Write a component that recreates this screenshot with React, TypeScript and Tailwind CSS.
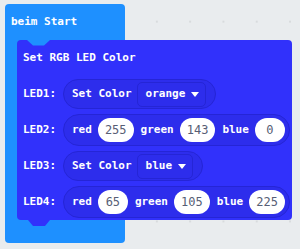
const mono = "font-['DejaVu_Sans_Mono','Liberation_Mono',monospace]";

type Part = { label: string; value: string };

function Oval({ value }: { value: string }) {
  return (
    <span className="flex h-[24px] min-w-[30px] items-center justify-center rounded-full bg-white px-[7px] text-[12px] font-normal text-[#575e75]">
      {value}
    </span>
  );
}

function ColorPill({ color }: { color: string }) {
  return (
    <div className="flex h-[30px] items-center gap-[5px] rounded-full border border-[#2525d6] bg-[#2d2dec] pl-[8px] pr-[9px]">
      <span>Set Color</span>
      <div className="flex h-[25px] items-center gap-[6px] rounded-[5px] border border-[#2525d6] pl-[8px] pr-[6px]">
        <span>{color}</span>
        <svg width="8" height="5" viewBox="0 0 8 5">
          <polygon points="0,0 8,0 4,5" fill="white" />
        </svg>
      </div>
    </div>
  );
}

function RgbPill({ parts }: { parts: Part[] }) {
  return (
    <div className="flex h-[32px] items-center gap-[7px] rounded-full border border-[#2525d6] bg-[#2d2dec] pl-[8px] pr-[4px]">
      {parts.map((p) => (
        <div key={p.label} className="flex items-center gap-[6px]">
          <span>{p.label}</span>
          <Oval value={p.value} />
        </div>
      ))}
    </div>
  );
}

function Row({ label, children }: { label: string; children: React.ReactNode }) {
  return (
    <div className="flex h-[36px] items-center gap-[6px]">
      <span className="w-[34px]">{label}</span>
      {children}
    </div>
  );
}

export default function App() {
  return (
    <div
      className={`relative h-[249px] w-[300px] overflow-hidden bg-[#e9ecee] bg-[radial-gradient(circle,#d8dbdd_1px,transparent_1.5px)] bg-[length:33.3px_33.3px] bg-[position:7px_5px] pl-[5px] pt-[4px] text-[11px] font-bold text-white ${mono}`}
    >
      {/* hat block */}
      <div className="h-[239px] w-[120px] rounded-[4px] bg-[#1e90ff]">
        <div className="flex h-[36px] items-center px-[6px]">beim Start</div>

        {/* neopixel block */}
        <div className="relative ml-[12px] w-[275px] rounded-[4px] bg-[#3131fb] pl-[6px]">
          <svg className="absolute left-[10px] top-0" width="23" height="6" viewBox="0 0 23 6">
            <polygon points="0,0 23,0 17,5.5 6,5.5" fill="#1e90ff" />
          </svg>
          <svg className="absolute left-[11px] top-full" width="22" height="6" viewBox="0 0 22 6">
            <polygon points="0,0 22,0 17,6 5,6" fill="#3131fb" />
          </svg>

          <div className="flex h-[36px] items-center">Set RGB LED Color</div>
          <Row label="LED1:">
            <ColorPill color="orange" />
          </Row>
          <Row label="LED2:">
            <RgbPill
              parts={[
                { label: 'red', value: '255' },
                { label: 'green', value: '143' },
                { label: 'blue', value: '0' },
              ]}
            />
          </Row>
          <Row label="LED3:">
            <ColorPill color="blue" />
          </Row>
          <Row label="LED4:">
            <RgbPill
              parts={[
                { label: 'red', value: '65' },
                { label: 'green', value: '105' },
                { label: 'blue', value: '225' },
              ]}
            />
          </Row>
        </div>
      </div>
    </div>
  );
}
